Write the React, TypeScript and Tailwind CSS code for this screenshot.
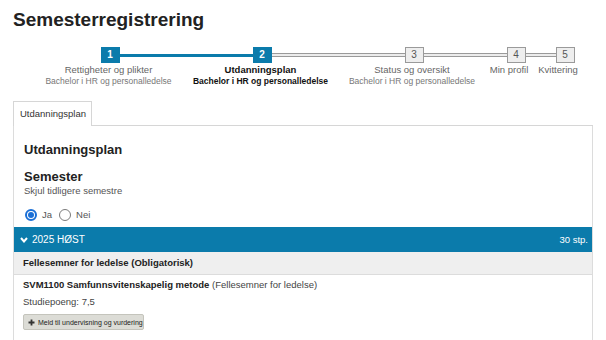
type Step = {
  n: number
  label: string
  sub?: string
  width: string
  shift: string
  active?: boolean
  done?: boolean
}

const steps: Step[] = [
  { n: 1, label: 'Rettigheter og plikter', sub: 'Bachelor i HR og personalledelse', width: 'w-[152px]', shift: 'pr-[3px]', done: true },
  { n: 2, label: 'Utdanningsplan', sub: 'Bachelor i HR og personalledelse', width: 'w-[152px]', shift: 'pr-[3px]', active: true },
  { n: 3, label: 'Status og oversikt', sub: 'Bachelor i HR og personalledelse', width: 'w-[152px]', shift: 'pr-[4px]' },
  { n: 4, label: 'Min profil', width: 'w-[52px]', shift: 'pr-[14px]' },
  { n: 5, label: 'Kvittering', width: 'w-[46px]', shift: 'pr-[14px]' },
]

function Line({ kind }: { kind: 'none' | 'blue' | 'grey' }) {
  if (kind === 'none') return <div className="flex-1" />
  if (kind === 'blue') return <div className="flex-1 h-[3px] bg-[#0b7bab]" />
  return <div className="flex-1 h-[4px] border-y border-[#9a9a9a] bg-[#ececec]" />
}

function Stepper() {
  return (
    <div className="flex ml-[21px] mt-[17px]">
      {steps.map((s, i) => {
        const left = i === 0 ? 'none' : i === 1 ? 'blue' : 'grey'
        const right = i === steps.length - 1 ? 'none' : i === 0 ? 'blue' : 'grey'
        const filled = s.active || s.done
        return (
          <div key={s.n} className={`${s.width} flex flex-col items-center shrink-0`}>
            <div className="flex items-center w-full h-[16px]">
              <Line kind={left} />
              <div
                className={`w-[19px] h-[16px] flex items-center justify-center text-[10px] leading-none ${
                  filled ? 'bg-[#0b7bab] text-white font-bold' : 'bg-[#eeeeee] border border-[#9a9a9a] text-[#555]'
                }`}
              >
                {s.n}
              </div>
              <Line kind={right} />
            </div>
            <div className={`${s.shift} flex flex-col items-center whitespace-nowrap`}>
              <div
                className={`mt-[1px] text-[9.5px] leading-[12px] ${
                  s.active ? 'font-bold text-[#111]' : 'text-[#666]'
                }`}
              >
                {s.label}
              </div>
              {s.sub && (
                <div
                  className={`text-[8.5px] leading-[11px] ${
                    s.active ? 'font-bold text-[#111]' : 'text-[#777]'
                  }`}
                >
                  {s.sub}
                </div>
              )}
            </div>
          </div>
        )
      })}
    </div>
  )
}

function Radio({ checked, label }: { checked?: boolean; label: string }) {
  return (
    <label className="flex items-center gap-[5px]">
      {checked ? (
        <span className="w-[12px] h-[12px] rounded-full border-2 border-[#1a6fd6] flex items-center justify-center">
          <span className="w-[6px] h-[6px] rounded-full bg-[#1a6fd6]" />
        </span>
      ) : (
        <span className="w-[12px] h-[12px] rounded-full border border-[#7a7a7a] bg-white" />
      )}
      <span className="text-[9.5px] leading-[12px] text-[#555]">{label}</span>
    </label>
  )
}

export default function App() {
  return (
    <div className="w-[606px] h-[340px] overflow-hidden bg-white px-[13px] font-['Liberation_Sans',Arial,sans-serif] text-[#333]">
      <h1 className="pt-[9px] text-[19px] leading-[21px] font-bold text-[#222]">Semesterregistrering</h1>

      <Stepper />

      <div className="flex items-end mt-[14px]">
        <div className="h-[25px] border-t border-x border-[#d6d6d6] pl-[6px] pr-[5px] pt-[6px] text-[9.5px] leading-[12px] text-[#333] bg-white">
          Utdanningsplan
        </div>
        <div className="flex-1 border-b border-[#d6d6d6]" />
      </div>

      <div className="border-x border-[#dcdcdc] h-[220px]">
        <div className="px-[10px] pt-[16px]">
          <h2 className="text-[13px] leading-[15px] font-bold text-[#222]">Utdanningsplan</h2>
          <h3 className="mt-[12px] text-[13px] leading-[15px] font-bold text-[#222]">Semester</h3>
          <div className="mt-[1px] text-[9.5px] leading-[12px] text-[#555]">Skjul tidligere semestre</div>
          <div className="mt-[11px] h-[14px] flex items-center gap-[7px] pl-[1px]">
            <Radio checked label="Ja" />
            <Radio label="Nei" />
          </div>
        </div>

        <div className="mt-[5px] h-[25px] bg-[#0b7bab] flex items-center justify-between pl-[6px] pr-[4px] text-white">
          <div className="flex items-center gap-[4px]">
            <svg width="8" height="6" viewBox="0 0 8 6" className="block">
              <polyline points="1,1 4,4.5 7,1" fill="none" stroke="white" strokeWidth="2" />
            </svg>
            <span className="text-[10px] leading-[12px]">2025 HØST</span>
          </div>
          <span className="text-[9.5px] leading-[12px]">30 stp.</span>
        </div>

        <div className="h-[23px] bg-[#efefef] border-b border-[#dcdcdc] flex items-center px-[9px]">
          <span className="text-[9.5px] leading-[12px] font-bold text-[#222]">Fellesemner for ledelse (Obligatorisk)</span>
        </div>

        <div className="px-[9px] pt-[4px]">
          <div className="text-[9.5px] leading-[12px] text-[#444]">
            <span className="font-bold text-[#222]">SVM1100 Samfunnsvitenskapelig metode</span> (Fellesemner for ledelse)
          </div>
          <div className="mt-[5px] text-[9.5px] leading-[12px] text-[#444]">Studiepoeng: 7,5</div>
          <button className="mt-[6px] h-[16px] w-[121px] flex items-center gap-[3px] pl-[4px] bg-[#dcdcd6] border border-[#c4c4bc] rounded-[2px] text-[7px] leading-none text-[#222]">
            <svg width="7" height="7" viewBox="0 0 7 7" className="block">
              <path d="M3.5 0.5v6M0.5 3.5h6" stroke="#333" strokeWidth="1.8" />
            </svg>
            Meld til undervisning og vurdering
          </button>
        </div>
      </div>
    </div>
  )
}
